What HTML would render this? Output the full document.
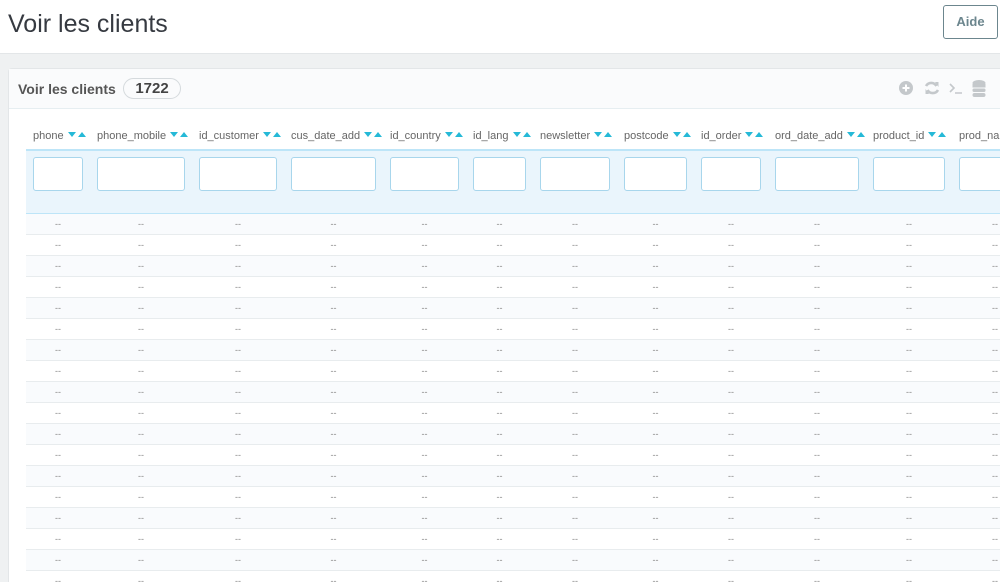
<!DOCTYPE html><html><head><meta charset="utf-8"><style>
*{box-sizing:border-box;margin:0;padding:0}
html,body{width:1000px;height:582px;overflow:hidden}
body{background:#eff1f2;font-family:"Liberation Sans",sans-serif;position:relative}
.top{position:absolute;left:0;top:0;width:1000px;height:54px;background:#fff;border-bottom:1px solid #e3e6e8}
.top h1{position:absolute;left:8px;top:10px;font-size:25px;font-weight:normal;color:#363a41}
.aide{position:absolute;left:943px;top:5px;width:55px;height:34px;border:1px solid #6c868e;border-radius:3px;font-size:13px;font-weight:bold;color:#6c868e;text-align:center;line-height:32px}
.panel{position:absolute;left:8px;top:68px;width:1000px;height:520px;background:#fff;border:1px solid #e3e6e8;border-radius:4px}
.ph{height:40px;background:#fafbfc;border-bottom:1px solid #e6eef1;position:relative}
.ph .t{position:absolute;left:9px;top:12px;font-size:14px;font-weight:bold;color:#555}
.badge{position:absolute;left:114px;top:9px;width:58px;height:21px;border:1px solid #d5dadd;border-radius:11px;font-size:15px;font-weight:bold;color:#444;text-align:center;line-height:19px}
table{position:absolute;left:26px;top:120px;border-collapse:collapse;table-layout:fixed;width:1012px}
th{height:30px;font-size:11px;font-weight:normal;color:#666;text-align:left;padding-left:7px;padding-top:3px;white-space:nowrap;overflow:hidden}
.ar{display:inline-block;width:18px;height:6px;vertical-align:1px;margin-left:1px;background:
linear-gradient(to bottom left,transparent 50%,#25b9d7 50%) 0 0/0 0 no-repeat}
.ar{background:none;position:relative}
.ar:before,.ar:after{content:"";position:absolute;top:0;border-left:4px solid transparent;border-right:4px solid transparent}
.ar:before{left:0;border-top:5px solid #25b9d7}
.ar:after{left:10px;border-bottom:5px solid #25b9d7}
tr.f td{height:63px;background:#eaf5fc;border-top:2px solid #bde5f8;border-bottom:1px solid #bde5f8;padding:0 7px;vertical-align:top;padding-top:6px}
tr.f div{height:34px;border:1px solid #a8d6ec;border-radius:3px;background:#fff}
tr.d td{height:21px;border-bottom:1px solid #e8ecee;text-align:center;font-size:9px;color:#888}
tr.d:nth-child(odd) td{background:#f9fbfd}
</style></head><body>
<div class="top"><h1>Voir les clients</h1><div class="aide">Aide</div></div>
<div class="panel"><div class="ph"><span class="t">Voir les clients</span><span class="badge">1722</span>
<svg style="position:absolute;left:890px;top:10px" width="100" height="20" viewBox="0 0 100 20">
<circle cx="7" cy="9" r="7" fill="#c4c8cb"/><path d="M7 5.5v7M3.5 9h7" stroke="#fff" stroke-width="2"/>
<path d="M27 7a6 6 0 0 1 10.5 0M39 11a6 6 0 0 1-10.5 0" fill="none" stroke="#c4c8cb" stroke-width="2.6"/><path d="M36 3l3.5 0 0 5zM30 15l-3.5 0 0-5z" fill="#c4c8cb"/>
<path d="M51 5l4 4-4 4M56 14h7" fill="none" stroke="#c4c8cb" stroke-width="1.6"/>
<ellipse cx="80" cy="4" rx="6.5" ry="3" fill="#c4c8cb"/><rect x="73.5" y="5" width="13" height="3.5" fill="#c4c8cb"/><rect x="73.5" y="9.5" width="13" height="3.5" rx="1.5" fill="#c4c8cb"/><rect x="73.5" y="14" width="13" height="4" rx="2" fill="#c4c8cb"/>
</svg></div></div>
<table>
<colgroup><col style="width:64px"><col style="width:102px"><col style="width:92px"><col style="width:99px"><col style="width:83px"><col style="width:67px"><col style="width:84px"><col style="width:77px"><col style="width:74px"><col style="width:98px"><col style="width:86px"><col style="width:86px"></colgroup>
<tr><th>phone <span class="ar"></span></th><th>phone_mobile <span class="ar"></span></th><th>id_customer <span class="ar"></span></th><th>cus_date_add <span class="ar"></span></th><th>id_country <span class="ar"></span></th><th>id_lang <span class="ar"></span></th><th>newsletter <span class="ar"></span></th><th>postcode <span class="ar"></span></th><th>id_order <span class="ar"></span></th><th>ord_date_add <span class="ar"></span></th><th>product_id <span class="ar"></span></th><th>prod_name <span class="ar"></span></th></tr>
<tr class="f"><td><div></div></td><td><div></div></td><td><div></div></td><td><div></div></td><td><div></div></td><td><div></div></td><td><div></div></td><td><div></div></td><td><div></div></td><td><div></div></td><td><div></div></td><td><div></div></td></tr>
<tbody>
<tr class="d"><td>--</td><td>--</td><td>--</td><td>--</td><td>--</td><td>--</td><td>--</td><td>--</td><td>--</td><td>--</td><td>--</td><td>--</td></tr>
<tr class="d"><td>--</td><td>--</td><td>--</td><td>--</td><td>--</td><td>--</td><td>--</td><td>--</td><td>--</td><td>--</td><td>--</td><td>--</td></tr>
<tr class="d"><td>--</td><td>--</td><td>--</td><td>--</td><td>--</td><td>--</td><td>--</td><td>--</td><td>--</td><td>--</td><td>--</td><td>--</td></tr>
<tr class="d"><td>--</td><td>--</td><td>--</td><td>--</td><td>--</td><td>--</td><td>--</td><td>--</td><td>--</td><td>--</td><td>--</td><td>--</td></tr>
<tr class="d"><td>--</td><td>--</td><td>--</td><td>--</td><td>--</td><td>--</td><td>--</td><td>--</td><td>--</td><td>--</td><td>--</td><td>--</td></tr>
<tr class="d"><td>--</td><td>--</td><td>--</td><td>--</td><td>--</td><td>--</td><td>--</td><td>--</td><td>--</td><td>--</td><td>--</td><td>--</td></tr>
<tr class="d"><td>--</td><td>--</td><td>--</td><td>--</td><td>--</td><td>--</td><td>--</td><td>--</td><td>--</td><td>--</td><td>--</td><td>--</td></tr>
<tr class="d"><td>--</td><td>--</td><td>--</td><td>--</td><td>--</td><td>--</td><td>--</td><td>--</td><td>--</td><td>--</td><td>--</td><td>--</td></tr>
<tr class="d"><td>--</td><td>--</td><td>--</td><td>--</td><td>--</td><td>--</td><td>--</td><td>--</td><td>--</td><td>--</td><td>--</td><td>--</td></tr>
<tr class="d"><td>--</td><td>--</td><td>--</td><td>--</td><td>--</td><td>--</td><td>--</td><td>--</td><td>--</td><td>--</td><td>--</td><td>--</td></tr>
<tr class="d"><td>--</td><td>--</td><td>--</td><td>--</td><td>--</td><td>--</td><td>--</td><td>--</td><td>--</td><td>--</td><td>--</td><td>--</td></tr>
<tr class="d"><td>--</td><td>--</td><td>--</td><td>--</td><td>--</td><td>--</td><td>--</td><td>--</td><td>--</td><td>--</td><td>--</td><td>--</td></tr>
<tr class="d"><td>--</td><td>--</td><td>--</td><td>--</td><td>--</td><td>--</td><td>--</td><td>--</td><td>--</td><td>--</td><td>--</td><td>--</td></tr>
<tr class="d"><td>--</td><td>--</td><td>--</td><td>--</td><td>--</td><td>--</td><td>--</td><td>--</td><td>--</td><td>--</td><td>--</td><td>--</td></tr>
<tr class="d"><td>--</td><td>--</td><td>--</td><td>--</td><td>--</td><td>--</td><td>--</td><td>--</td><td>--</td><td>--</td><td>--</td><td>--</td></tr>
<tr class="d"><td>--</td><td>--</td><td>--</td><td>--</td><td>--</td><td>--</td><td>--</td><td>--</td><td>--</td><td>--</td><td>--</td><td>--</td></tr>
<tr class="d"><td>--</td><td>--</td><td>--</td><td>--</td><td>--</td><td>--</td><td>--</td><td>--</td><td>--</td><td>--</td><td>--</td><td>--</td></tr>
<tr class="d"><td>--</td><td>--</td><td>--</td><td>--</td><td>--</td><td>--</td><td>--</td><td>--</td><td>--</td><td>--</td><td>--</td><td>--</td></tr>
</tbody></table>
</body></html>
